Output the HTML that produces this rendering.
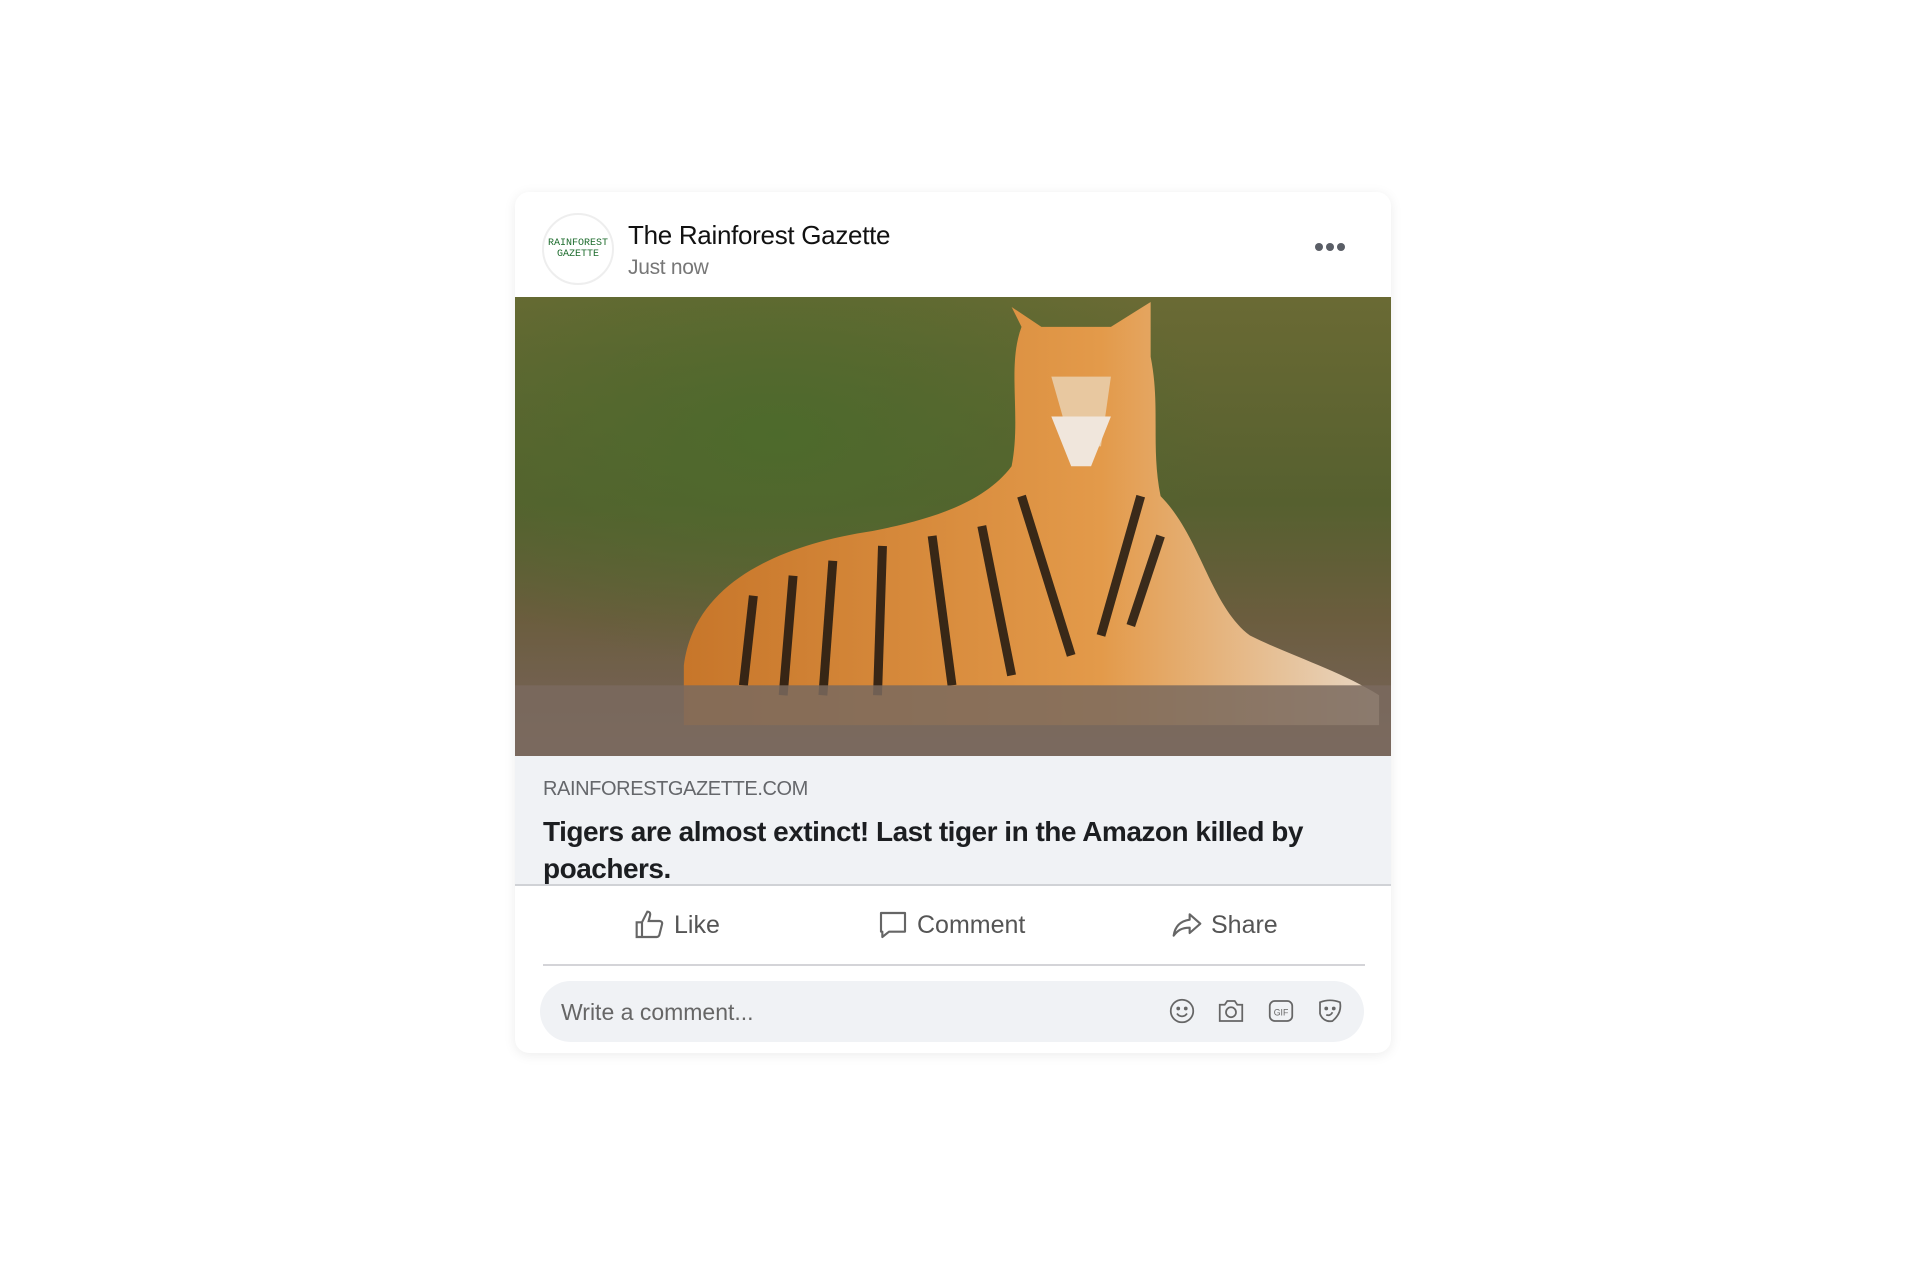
<!DOCTYPE html>
<html><head><meta charset="utf-8"><style>
*{margin:0;padding:0;box-sizing:border-box}
body{width:1920px;height:1280px;background:#fff;font-family:"Liberation Sans",sans-serif;position:relative;overflow:hidden}
.card{position:absolute;left:515px;top:192px;width:876px;height:861px;background:#fff;border-radius:14px;box-shadow:0 2px 12px rgba(0,0,0,.08);overflow:hidden}
.av{position:absolute;left:27px;top:21px;width:72px;height:72px;border-radius:50%;border:2px solid #eee;text-align:center;font-family:"Liberation Mono",monospace;color:#1c6b2c;font-size:10px;line-height:11px;padding-top:23px;letter-spacing:0}
.name{position:absolute;left:113px;top:28px;font-size:26px;color:#111;letter-spacing:-.3px}
.time{position:absolute;left:113px;top:64px;font-size:21px;color:#777;letter-spacing:-.3px}
.dots{position:absolute;left:800px;top:46px}
.dots i{display:inline-block;width:8px;height:8px;border-radius:50%;background:#5a5e66;margin-right:3px}
.img{position:absolute;left:0;top:105px;width:876px;height:459px}
.link{position:absolute;left:0;top:564px;width:876px;height:130px;background:#f0f2f5;border-bottom:2px solid #d0d2d6}
.dom{position:absolute;left:28px;top:22px;font-size:20px;color:#65676b;letter-spacing:-.4px}
.title{position:absolute;left:28px;top:57px;width:840px;font-size:28px;font-weight:bold;color:#1c1e21;line-height:37px;letter-spacing:-.5px}
.act{position:absolute;top:717px;font-size:25px;color:#555;display:flex;align-items:center;gap:8px}
.hr{position:absolute;left:28px;top:772px;width:822px;height:2px;background:#d4d4d8}
.inp{position:absolute;left:25px;top:789px;width:824px;height:61px;border-radius:31px;background:#f0f2f5}
.ph{position:absolute;left:21px;top:18px;font-size:23px;color:#666}
.ic{position:absolute;top:15px}
</style></head><body>
<div class="card">
<div class="av">RAINFOREST<br>GAZETTE</div>
<div class="name">The Rainforest Gazette</div>
<div class="time">Just now</div>
<div class="dots"><i></i><i></i><i></i></div>
<svg class="img" viewBox="0 0 882 461" preserveAspectRatio="none">
<defs>
<linearGradient id="bg" x1="0" y1="0" x2="0" y2="1"><stop offset="0" stop-color="#6a6a34"/><stop offset=".45" stop-color="#56602f"/><stop offset=".7" stop-color="#6b5d3e"/><stop offset="1" stop-color="#7a6560"/></linearGradient>
<radialGradient id="g2" cx=".3" cy=".3" r=".5"><stop offset="0" stop-color="#4d6a2c"/><stop offset="1" stop-color="#4d6a2c" stop-opacity="0"/></radialGradient>
<linearGradient id="tg" x1="0" y1="0" x2="1" y2="0"><stop offset="0" stop-color="#c7762a"/><stop offset=".6" stop-color="#e39a4a"/><stop offset="1" stop-color="#e8d7c4"/></linearGradient>
</defs>
<rect width="882" height="461" fill="url(#bg)"/>
<rect width="882" height="461" fill="url(#g2)"/>
<path d="M170 370 C180 290 260 250 360 235 C410 225 470 210 500 170 C510 120 495 70 510 30 L500 10 L530 30 L600 30 L640 5 L640 60 C650 110 640 150 650 200 C690 240 700 310 740 340 C780 360 830 375 870 400 L870 430 L170 430 Z" fill="url(#tg)"/>
<path d="M540 80 L600 80 L590 150 L560 150 Z" fill="#e8c8a0"/>
<path d="M540 120 L600 120 L580 170 L560 170 Z" fill="#f0e6dc"/>
<g stroke="#1d1610" stroke-width="9" fill="none" opacity=".85">
<path d="M240 300 L230 390"/><path d="M280 280 L270 400"/><path d="M320 265 L310 400"/><path d="M370 250 L365 400"/><path d="M420 240 L440 390"/><path d="M470 230 L500 380"/><path d="M510 200 L560 360"/><path d="M630 200 L590 340"/><path d="M650 240 L620 330"/>
</g>
<rect y="390" width="882" height="71" fill="#7a6a5e" opacity=".85"/>
</svg>
<div class="link">
<div class="dom">RAINFORESTGAZETTE.COM</div>
<div class="title">Tigers are almost extinct! Last tiger in the Amazon killed by poachers.</div>
</div>
<div class="act" style="left:119px"><svg width="32" height="32" viewBox="0 0 24 24" fill="none" stroke="#666" stroke-width="1.6"><path d="M2 10h4v11H2zM6 10l4-8c2 0 2.5 1.5 2 3l-1 4h8c1.5 0 2.5 1 2 2.5l-2 8c-.4 1-1 1.5-2 1.5H6"/></svg>Like</div>
<div class="act" style="left:362px"><svg width="32" height="32" viewBox="0 0 24 24" fill="none" stroke="#666" stroke-width="1.6"><path d="M3 3h18v14H9l-5 4v-4H3z" stroke-linejoin="round"/></svg>Comment</div>
<div class="act" style="left:656px"><svg width="32" height="32" viewBox="0 0 24 24" fill="none" stroke="#666" stroke-width="1.6"><path d="M14 4l8 7-8 7v-4c-6 0-9 2-12 6 1-7 5-11 12-12z" stroke-linejoin="round"/></svg>Share</div>
<div class="hr"></div>
<div class="inp"><div class="ph">Write a comment...</div>
<svg class="ic" style="left:627px" width="30" height="30" viewBox="0 0 24 24" fill="none" stroke="#666" stroke-width="1.4"><circle cx="12" cy="12" r="9"/><circle cx="9" cy="10" r=".8" fill="#666"/><circle cx="15" cy="10" r=".8" fill="#666"/><path d="M8 14c2 3 6 3 8 0"/></svg>
<svg class="ic" style="left:676px" width="30" height="30" viewBox="0 0 24 24" fill="none" stroke="#666" stroke-width="1.4"><path d="M3 7h4l2-3h6l2 3h4v13H3z"/><circle cx="12" cy="13" r="4"/></svg>
<svg class="ic" style="left:726px" width="30" height="30" viewBox="0 0 24 24" fill="none" stroke="#666" stroke-width="1.4"><rect x="3" y="4" width="18" height="16" rx="4"/><text x="12" y="15.5" font-size="7" text-anchor="middle" fill="#666" stroke="none" font-family="Liberation Sans">GIF</text></svg>
<svg class="ic" style="left:775px" width="30" height="30" viewBox="0 0 24 24" fill="none" stroke="#666" stroke-width="1.4"><path d="M4 5c5-2 11-2 16 0 1 5 0 10-6 15-5 1-9-2-10-6z"/><circle cx="9" cy="10" r=".8" fill="#666"/><circle cx="15" cy="10" r=".8" fill="#666"/><path d="M9 15c2 1 4 0 5-2"/></svg>
</div>
</div>
</body></html>
